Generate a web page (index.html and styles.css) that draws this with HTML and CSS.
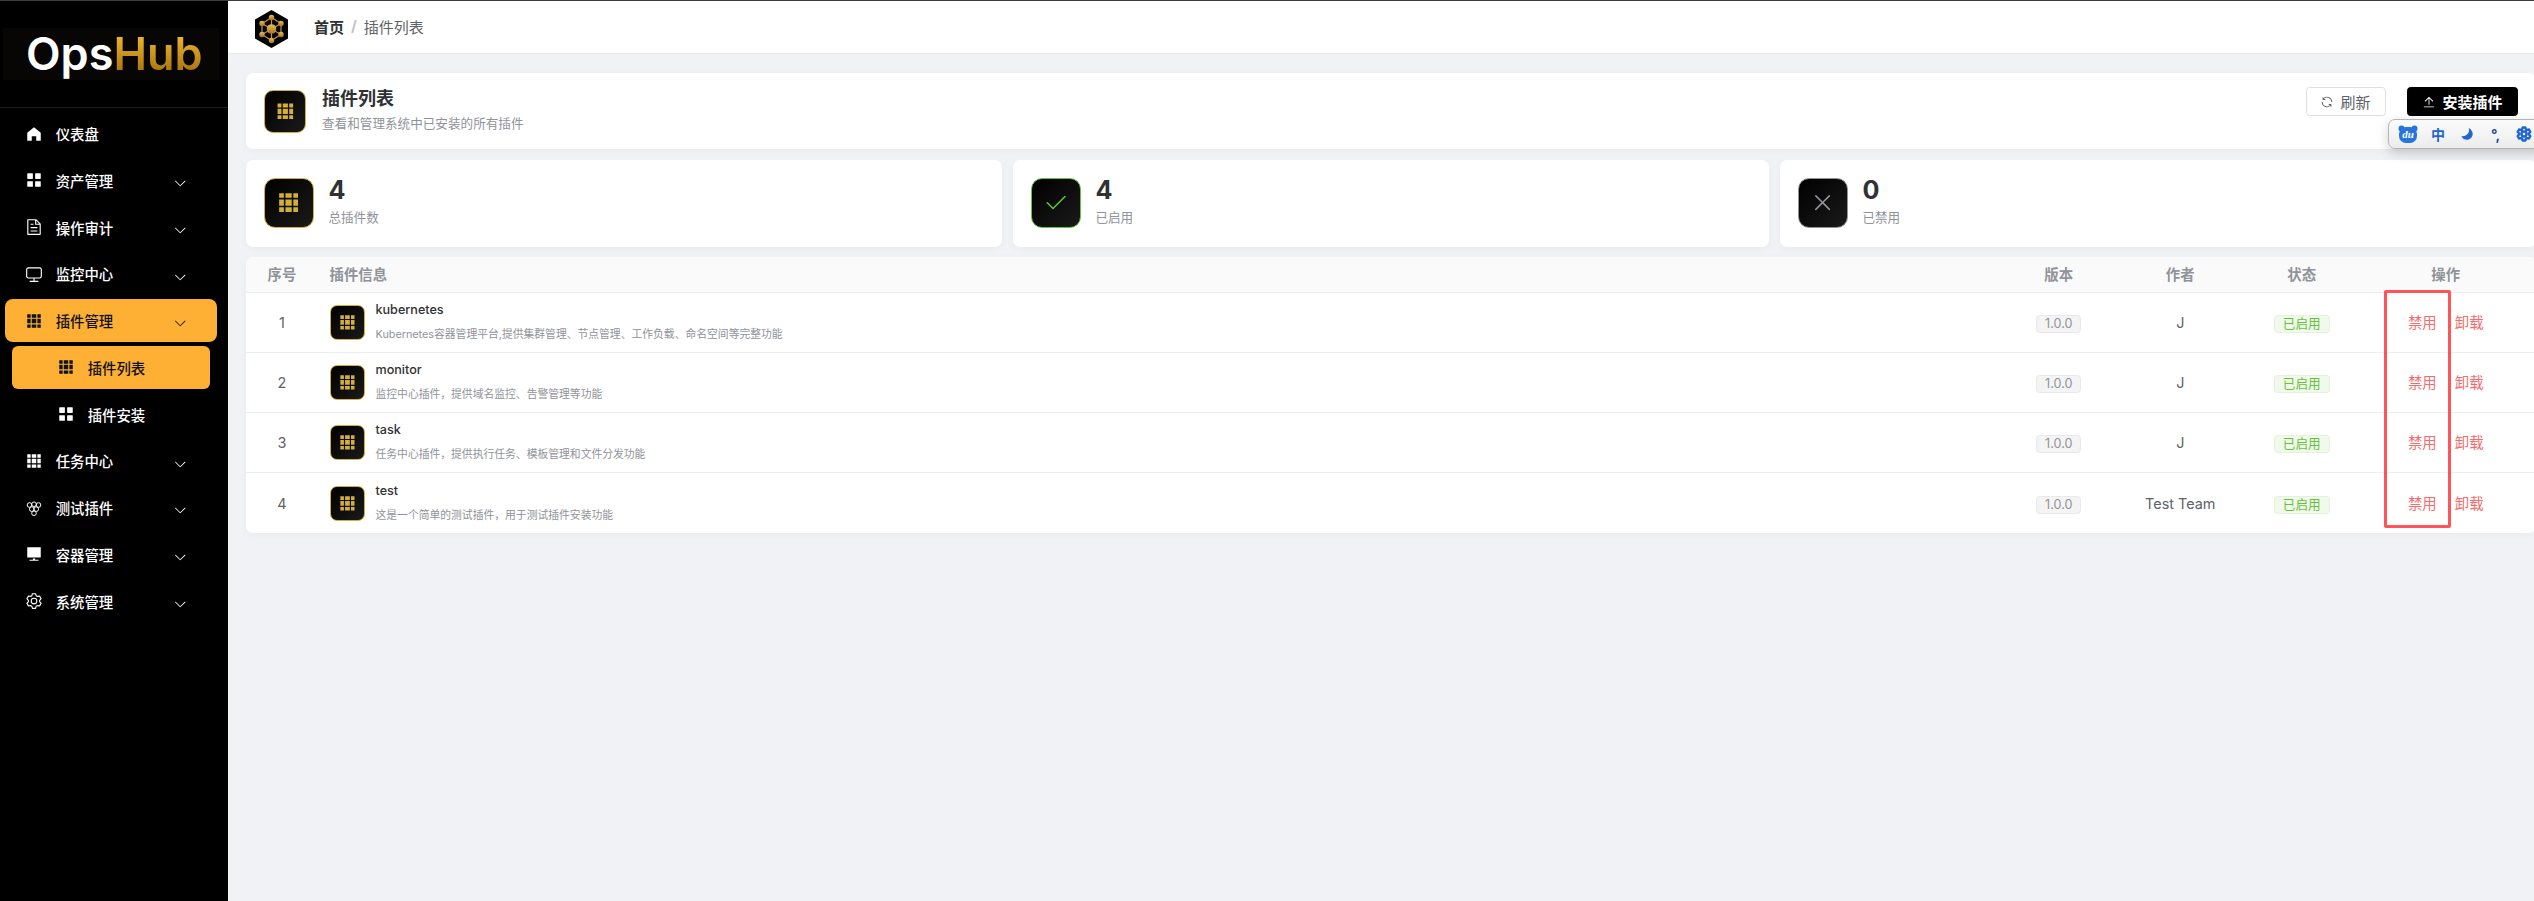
FILE: index.html
```html
<!DOCTYPE html>
<html lang="zh-CN">
<head>
    <meta charset="UTF-8">
    <title>OpsHub - 插件列表</title>
    <link rel="stylesheet" href="styles.css">
</head>
<body>
    <svg class="sprite" xmlns="http://www.w3.org/2000/svg">
        <symbol id="i-home" viewBox="0 0 1024 1024"><path d="M512 128 128 447.936V896h255.936V640H640v256h255.936V447.936z"/></symbol>
        <symbol id="i-menu" viewBox="0 0 1024 1024"><path d="M160 448a32 32 0 0 1-32-32V160.064a32 32 0 0 1 32-32h256a32 32 0 0 1 32 32V416a32 32 0 0 1-32 32zm448 0a32 32 0 0 1-32-32V160.064a32 32 0 0 1 32-32h255.936a32 32 0 0 1 32 32V416a32 32 0 0 1-32 32zM160 896a32 32 0 0 1-32-32V608a32 32 0 0 1 32-32h256a32 32 0 0 1 32 32v256a32 32 0 0 1-32 32zm448 0a32 32 0 0 1-32-32V608a32 32 0 0 1 32-32h255.936a32 32 0 0 1 32 32v256a32 32 0 0 1-32 32z"/></symbol>
        <symbol id="i-doc" viewBox="0 0 1024 1024"><path d="M832 384H576V128H192v768h640zm-26.496-64L640 154.496V320zM160 64h480l256 256v608a32 32 0 0 1-32 32H160a32 32 0 0 1-32-32V96a32 32 0 0 1 32-32m160 448h384v64H320zm0-192h160v64H320zm0 384h384v64H320z"/></symbol>
        <symbol id="i-monitor" viewBox="0 0 1024 1024"><path d="M544 768v128h192a32 32 0 1 1 0 64H288a32 32 0 1 1 0-64h192V768H192A128 128 0 0 1 64 640V256a128 128 0 0 1 128-128h640a128 128 0 0 1 128 128v384a128 128 0 0 1-128 128zM192 192a64 64 0 0 0-64 64v384a64 64 0 0 0 64 64h640a64 64 0 0 0 64-64V256a64 64 0 0 0-64-64z"/></symbol>
        <symbol id="i-grid" viewBox="0 0 1024 1024"><path d="M640 384v256H384V384zm64 0h192v256H704zm-64 512H384V704h256zm64 0V704h192v192zm-64-768v192H384V128zm64 0h192v192H704zM320 384v256H128V384zm0 512H128V704h192zm0-768v192H128V128z"/></symbol>
        <symbol id="i-grape" viewBox="0 0 24 24"><g fill="none" stroke="currentColor" stroke-width="1.300"><circle cx="6" cy="8" r="3.100"/><circle cx="12" cy="7" r="3.100"/><circle cx="18" cy="8" r="3.100"/><circle cx="9" cy="13.500" r="3.100"/><circle cx="15" cy="13.500" r="3.100"/><circle cx="12" cy="19" r="3.100"/></g></symbol>
        <symbol id="i-platform" viewBox="0 0 1024 1024"><path d="M448 832v-64h128v64h192v64H256v-64zM128 704V128h768v576z"/></symbol>
        <symbol id="i-setting" viewBox="0 0 1024 1024"><path d="M600.704 64a32 32 0 0 1 30.464 22.208l35.2 109.376c14.784 7.232 28.928 15.36 42.432 24.512l112.384-24.192a32 32 0 0 1 34.432 15.36L944.32 364.8a32 32 0 0 1-4.032 37.504l-77.12 85.12a357.12 357.12 0 0 1 0 49.024l77.12 85.248a32 32 0 0 1 4.032 37.504l-88.704 153.6a32 32 0 0 1-34.432 15.296L708.8 803.904c-13.44 9.088-27.648 17.28-42.368 24.512l-35.264 109.376A32 32 0 0 1 600.704 960H423.296a32 32 0 0 1-30.464-22.208L357.696 828.48a351.616 351.616 0 0 1-42.56-24.64l-112.32 24.256a32 32 0 0 1-34.432-15.36L79.68 659.2a32 32 0 0 1 4.032-37.504l77.12-85.248a357.12 357.12 0 0 1 0-48.896l-77.12-85.248A32 32 0 0 1 79.68 364.8l88.704-153.6a32 32 0 0 1 34.432-15.296l112.32 24.256c13.568-9.152 27.776-17.408 42.56-24.64l35.2-109.312A32 32 0 0 1 423.232 64H600.64zm-23.424 64H446.72l-36.352 113.088-24.512 11.968a294.113 294.113 0 0 0-34.816 20.096l-22.656 15.36-116.224-25.088-65.28 113.152 79.68 88.192-1.92 27.136a293.12 293.12 0 0 0 0 40.192l1.92 27.136-79.808 88.192 65.344 113.152 116.224-25.024 22.656 15.296a294.113 294.113 0 0 0 34.816 20.096l24.512 11.968L446.72 896h130.688l36.48-113.152 24.448-11.904a288.282 288.282 0 0 0 34.752-20.096l22.592-15.296 116.288 25.024 65.28-113.152-79.744-88.192 1.92-27.136a293.12 293.12 0 0 0 0-40.256l-1.92-27.136 79.808-88.128-65.344-113.152-116.288 24.96-22.592-15.232a287.616 287.616 0 0 0-34.752-20.096l-24.448-11.904L577.344 128zM512 320a192 192 0 1 1 0 384 192 192 0 0 1 0-384m0 64a128 128 0 1 0 0 256 128 128 0 0 0 0-256"/></symbol>
        <symbol id="i-arrow" viewBox="0 0 1024 1024"><path d="M831.872 340.864 512 652.672 192.128 340.864a30.592 30.592 0 0 0-42.752 0 29.12 29.12 0 0 0 0 41.6L489.664 714.24a32 32 0 0 0 44.672 0l340.288-331.712a29.12 29.12 0 0 0 0-41.728 30.592 30.592 0 0 0-42.752 0z"/></symbol>
        <symbol id="i-refresh" viewBox="0 0 1024 1024"><path d="M771.776 794.88A384 384 0 0 1 128 512h64a320 320 0 0 0 555.712 216.448H654.72a32 32 0 1 1 0-64h149.056a32 32 0 0 1 32 32v148.928a32 32 0 1 1-64 0v-50.56zM276.288 295.616h92.992a32 32 0 0 1 0 64H220.16a32 32 0 0 1-32-32V178.56a32 32 0 0 1 64 0v50.56A384 384 0 0 1 896.128 512h-64a320 320 0 0 0-555.776-216.384z"/></symbol>
        <symbol id="i-upload" viewBox="0 0 1024 1024"><path d="M160 832h704a32 32 0 1 1 0 64H160a32 32 0 1 1 0-64m384-578.304V704h-64V247.296L237.248 490.048 192 444.8 508.8 128l316.8 316.8-45.312 45.248z"/></symbol>
        <symbol id="i-check" viewBox="0 0 1024 1024"><path d="M406.656 706.944 195.84 496.256a32 32 0 1 0-45.248 45.248l256 256 512-512a32 32 0 0 0-45.248-45.248L406.592 706.944z"/></symbol>
        <symbol id="i-close" viewBox="0 0 1024 1024"><path d="M764.288 214.592 512 466.88 259.712 214.592a31.936 31.936 0 0 0-45.12 45.12L466.752 512 214.528 764.224a31.936 31.936 0 1 0 45.12 45.184L512 557.184l252.288 252.288a31.936 31.936 0 0 0 45.12-45.12L557.12 512.064l252.288-252.288a31.936 31.936 0 1 0-45.12-45.184z"/></symbol>
    </svg>

    <aside class="sidebar">
        <div class="logo-area">
            <div class="logo-panel"><span class="logo-ops">Ops</span><span class="logo-hub">Hub</span></div>
        </div>
        <nav class="menu">
            <a class="menu-item"><svg class="icon"><use href="#i-home"/></svg><span>仪表盘</span></a>
            <a class="menu-item"><svg class="icon"><use href="#i-menu"/></svg><span>资产管理</span><svg class="arrow"><use href="#i-arrow"/></svg></a>
            <a class="menu-item"><svg class="icon"><use href="#i-doc"/></svg><span>操作审计</span><svg class="arrow"><use href="#i-arrow"/></svg></a>
            <a class="menu-item"><svg class="icon"><use href="#i-monitor"/></svg><span>监控中心</span><svg class="arrow"><use href="#i-arrow"/></svg></a>
            <a class="menu-item active"><svg class="icon"><use href="#i-grid"/></svg><span>插件管理</span><svg class="arrow"><use href="#i-arrow"/></svg></a>
            <a class="menu-item sub active"><svg class="icon"><use href="#i-grid"/></svg><span>插件列表</span></a>
            <a class="menu-item sub"><svg class="icon"><use href="#i-menu"/></svg><span>插件安装</span></a>
            <a class="menu-item"><svg class="icon"><use href="#i-grid"/></svg><span>任务中心</span><svg class="arrow"><use href="#i-arrow"/></svg></a>
            <a class="menu-item"><svg class="icon"><use href="#i-grape"/></svg><span>测试插件</span><svg class="arrow"><use href="#i-arrow"/></svg></a>
            <a class="menu-item"><svg class="icon"><use href="#i-platform"/></svg><span>容器管理</span><svg class="arrow"><use href="#i-arrow"/></svg></a>
            <a class="menu-item"><svg class="icon"><use href="#i-setting"/></svg><span>系统管理</span><svg class="arrow"><use href="#i-arrow"/></svg></a>
        </nav>
    </aside>

    <main class="main">
        <header class="topbar">
            <svg class="hex-logo" viewBox="0 0 33 38" xmlns="http://www.w3.org/2000/svg">
                <defs>
                    <linearGradient id="gold" x1="0" y1="0" x2="0" y2="1">
                        <stop offset="0" stop-color="#e6bd5c"/>
                        <stop offset="1" stop-color="#a8741c"/>
                    </linearGradient>
                </defs>
                <path d="M16.5 0 33 9.5v19L16.5 38 0 28.500V9.500z" fill="#000"/>
                <g stroke="#c8953a" stroke-width="1.2" fill="none">
                    <path d="M16.500 7.500 26 13.500v11L16.500 30.500 7 24.500v-11z"/>
                    <path d="M16.500 7.500v23M7 13.500l19 11M26 13.500l-19 11"/>
                </g>
                <g fill="url(#gold)">
                    <circle cx="16.500" cy="7.500" r="2.700"/>
                    <circle cx="26" cy="13.500" r="2.700"/>
                    <circle cx="26" cy="24.500" r="2.700"/>
                    <circle cx="16.500" cy="30.500" r="2.700"/>
                    <circle cx="7" cy="24.500" r="2.700"/>
                    <circle cx="7" cy="13.500" r="2.700"/>
                    <circle cx="16.500" cy="19" r="4.800"/>
                </g>
            </svg>
            <div class="breadcrumb">
                <span class="crumb-home">首页</span>
                <span class="crumb-sep">/</span>
                <span class="crumb-current">插件列表</span>
            </div>
        </header>

        <div class="content">
            <section class="card page-head">
                <div class="gold-box head-box"><svg><use href="#i-grid"/></svg></div>
                <div class="page-text">
                    <div class="page-title">插件列表</div>
                    <div class="page-sub">查看和管理系统中已安装的所有插件</div>
                </div>
                <div class="page-actions">
                    <button class="btn btn-plain"><svg><use href="#i-refresh"/></svg>刷新</button>
                    <button class="btn btn-dark"><svg><use href="#i-upload"/></svg>安装插件</button>
                </div>
            </section>

            <section class="stats">
                <div class="card stat">
                    <div class="gold-box stat-box"><svg><use href="#i-grid"/></svg></div>
                    <div class="stat-text">
                        <div class="stat-num">4</div>
                        <div class="stat-label">总插件数</div>
                    </div>
                </div>
                <div class="card stat">
                    <div class="gold-box stat-box green"><svg><use href="#i-check"/></svg></div>
                    <div class="stat-text">
                        <div class="stat-num">4</div>
                        <div class="stat-label">已启用</div>
                    </div>
                </div>
                <div class="card stat">
                    <div class="gold-box stat-box gray"><svg><use href="#i-close"/></svg></div>
                    <div class="stat-text">
                        <div class="stat-num">0</div>
                        <div class="stat-label">已禁用</div>
                    </div>
                </div>
            </section>

            <section class="card plugin-table">
                <div class="row head-row">
                    <div class="cell-c">序号</div>
                    <div class="cell-info">插件信息</div>
                    <div class="cell-c">版本</div>
                    <div class="cell-c">作者</div>
                    <div class="cell-c">状态</div>
                    <div class="cell-c">操作</div>
                </div>
                <div class="row">
                    <div class="cell-c">1</div>
                    <div class="cell-info">
                        <div class="gold-box row-box"><svg><use href="#i-grid"/></svg></div>
                        <div class="plugin-text">
                            <div class="plugin-name">kubernetes</div>
                            <div class="plugin-desc">Kubernetes容器管理平台,提供集群管理、节点管理、工作负载、命名空间等完整功能</div>
                        </div>
                    </div>
                    <div class="cell-c"><span class="tag tag-gray">1.0.0</span></div>
                    <div class="cell-c">J</div>
                    <div class="cell-c"><span class="tag tag-green">已启用</span></div>
                    <div class="cell-c ops"><a>禁用</a><a>卸载</a></div>
                </div>
                <div class="row">
                    <div class="cell-c">2</div>
                    <div class="cell-info">
                        <div class="gold-box row-box"><svg><use href="#i-grid"/></svg></div>
                        <div class="plugin-text">
                            <div class="plugin-name">monitor</div>
                            <div class="plugin-desc">监控中心插件，提供域名监控、告警管理等功能</div>
                        </div>
                    </div>
                    <div class="cell-c"><span class="tag tag-gray">1.0.0</span></div>
                    <div class="cell-c">J</div>
                    <div class="cell-c"><span class="tag tag-green">已启用</span></div>
                    <div class="cell-c ops"><a>禁用</a><a>卸载</a></div>
                </div>
                <div class="row">
                    <div class="cell-c">3</div>
                    <div class="cell-info">
                        <div class="gold-box row-box"><svg><use href="#i-grid"/></svg></div>
                        <div class="plugin-text">
                            <div class="plugin-name">task</div>
                            <div class="plugin-desc">任务中心插件，提供执行任务、模板管理和文件分发功能</div>
                        </div>
                    </div>
                    <div class="cell-c"><span class="tag tag-gray">1.0.0</span></div>
                    <div class="cell-c">J</div>
                    <div class="cell-c"><span class="tag tag-green">已启用</span></div>
                    <div class="cell-c ops"><a>禁用</a><a>卸载</a></div>
                </div>
                <div class="row">
                    <div class="cell-c">4</div>
                    <div class="cell-info">
                        <div class="gold-box row-box"><svg><use href="#i-grid"/></svg></div>
                        <div class="plugin-text">
                            <div class="plugin-name">test</div>
                            <div class="plugin-desc">这是一个简单的测试插件，用于测试插件安装功能</div>
                        </div>
                    </div>
                    <div class="cell-c"><span class="tag tag-gray">1.0.0</span></div>
                    <div class="cell-c">Test Team</div>
                    <div class="cell-c"><span class="tag tag-green">已启用</span></div>
                    <div class="cell-c ops"><a>禁用</a><a>卸载</a></div>
                </div>
            </section>
        </div>
    </main>

    <!-- input method toolbar sitting over the page -->
    <div class="ime-bar">
        <svg class="ime-bear" viewBox="0 0 20 18">
            <circle cx="3.500" cy="3.500" r="3"/>
            <circle cx="16.500" cy="3.500" r="3"/>
            <rect x="1" y="2" width="18" height="16" rx="7"/>
            <text x="10" y="13" text-anchor="middle">du</text>
        </svg>
        <span class="ime-zh">中</span>
        <svg class="ime-moon" viewBox="0 0 16 16"><path d="M10 1c1.500 5-1.500 9.500-8.500 9.500C3 13.500 6 15 9 14.500c4.500-.8 6.500-5.500 5-9C13.300 3.500 12 2 10 1z"/></svg>
        <span class="ime-punct">°,</span>
        <svg class="ime-gear"><use href="#i-setting"/></svg>
    </div>

    <!-- red annotation drawn on the screenshot -->
    <div class="red-box"></div>
</body>
</html>
```

FILE: styles.css
```css
* {
    margin: 0;
    padding: 0;
    box-sizing: border-box;
}

html, body {
    height: 100%;
}

body {
    display: flex;
    overflow: hidden;
    font-family: Inter, "Noto Sans CJK SC", sans-serif;
    font-size: 14.4px;
    color: #606266;
    background-color: #f0f2f5;
    border-top: 1px solid #3d3a40;
}

.sprite {
    display: none;
}

svg {
    fill: currentColor;
    flex-shrink: 0;
}

/* sidebar */
.sidebar {
    width: 228px;
    flex-shrink: 0;
    background-color: #000;
    color: #fff;
}

.logo-area {
    height: 107px;
    padding: 27px 9px 0 3px;
    border-bottom: 1px solid #1c1c1c;
}

.logo-panel {
    height: 52px;
    padding-left: 23px;
    background-color: #070605;
    font-size: 45px;
    font-weight: 600;
    line-height: 52px;
}

.logo-ops {
    color: #fff;
}

.logo-hub {
    background: linear-gradient(180deg, #eeb92e 15%, #a9720f 85%);
    -webkit-background-clip: text;
    background-clip: text;
    color: transparent;
}

.menu {
    padding-top: 4px;
    display: flex;
    flex-direction: column;
    gap: 3.750px;
}

.menu-item {
    display: flex;
    align-items: center;
    height: 43px;
    margin: 0 11px 0 5px;
    padding: 0 30px 0 20px;
    border-radius: 8px;
    font-weight: 500;
    color: #fff;
}

.menu-item .icon {
    width: 18px;
    height: 18px;
    margin-right: 12.700px;
}

.menu-item .arrow {
    width: 14.400px;
    height: 14.400px;
    margin-left: auto;
    margin-top: 6px;
}

.menu-item.sub {
    margin: 0 18px 0 12px;
    padding-left: 45px;
    border-radius: 6px;
}

.menu-item.active {
    background-color: #fdb034;
    color: #111;
}

/* top bar */
.main {
    flex: 1;
    min-width: 0;
    overflow: hidden;
}

.topbar {
    display: flex;
    align-items: center;
    gap: 26px;
    height: 53px;
    padding-left: 27px;
    background-color: #fff;
    border-bottom: 1px solid #e6e8eb;
}

.hex-logo {
    width: 33px;
    height: 38px;
    margin-top: 4px;
}

.breadcrumb {
    display: flex;
    gap: 7px;
    padding-bottom: 2px;
    font-size: 15px;
}

.crumb-home {
    font-weight: 600;
    color: #303133;
}

.crumb-sep {
    color: #c0c4cc;
    font-weight: 700;
}

.crumb-current {
    color: #606266;
}

/* content */
.content {
    display: flex;
    flex-direction: column;
    gap: 10.500px;
    width: 2308px;
    padding: 19px 0 0 18px;
}

.card {
    background-color: #fff;
    border-radius: 7px;
    box-shadow: 0 2px 10px rgba(0, 0, 0, 0.03);
}

.gold-box {
    display: flex;
    align-items: center;
    justify-content: center;
    flex-shrink: 0;
    background: linear-gradient(135deg, #000, #1a1a1a);
    border: 1px solid #d4af37;
    color: #d4af37;
}

.page-head {
    display: flex;
    align-items: center;
    height: 76px;
    padding: 0 18px;
}

.head-box {
    width: 42px;
    height: 43px;
    border-radius: 9px;
}

.head-box svg {
    width: 20.700px;
    height: 20.700px;
}

.page-text {
    margin-left: 16px;
    padding-bottom: 2px;
}

.page-title {
    font-size: 18px;
    font-weight: 600;
    line-height: 25px;
    color: #303133;
}

.page-sub {
    margin-top: 3px;
    font-size: 12.600px;
    line-height: 20px;
    color: #909399;
}

.page-actions {
    display: flex;
    align-self: flex-start;
    gap: 21.500px;
    margin: 14px 0 0 auto;
}

.btn {
    display: flex;
    align-items: center;
    justify-content: center;
    gap: 6px;
    height: 29px;
    border-radius: 3.600px;
    font-family: inherit;
    font-size: 15px;
}

.btn svg {
    width: 14px;
    height: 14px;
}

.btn-plain {
    width: 80px;
    background-color: #fff;
    border: 1px solid #dcdfe6;
    color: #606266;
}

.btn-dark {
    width: 111px;
    background-color: #000;
    border: 1px solid #000;
    color: #fff;
    font-weight: 600;
}

.stats {
    display: grid;
    grid-template-columns: repeat(3, 756px);
    gap: 11px;
}

.stat {
    display: flex;
    align-items: center;
    gap: 14.400px;
    height: 87px;
    padding: 0 18px;
}

.stat-box {
    width: 50px;
    height: 50px;
    border-radius: 11px;
}

.stat-box svg {
    width: 25.200px;
    height: 25.200px;
}

.stat-box.green {
    border-color: #67c23a;
    color: #67c23a;
}

.stat-box.gray {
    border-color: #909399;
    color: #909399;
}

.stat-text {
    padding-bottom: 3px;
}

.stat-num {
    font-size: 25.200px;
    font-weight: 700;
    line-height: 30px;
    color: #303133;
}

.stat-label {
    margin-top: 3px;
    font-size: 12.600px;
    line-height: 20px;
    color: #909399;
}

/* table */
.plugin-table {
    overflow: hidden;
}

.row {
    display: grid;
    grid-template-columns: 72px 1fr 121.500px 121.500px 121.500px 166.500px;
    align-items: center;
    height: 60px;
    padding-right: 7px;
    border-bottom: 1px solid #ebeef5;
}

.row:last-child {
    border-bottom: none;
}

.head-row {
    height: 36px;
    padding-bottom: 2px;
    background-color: #fafafa;
    font-weight: 600;
    color: #909399;
}

.cell-c {
    display: flex;
    align-items: center;
    justify-content: center;
}

.cell-info {
    display: flex;
    align-items: center;
    gap: 11px;
    padding-left: 11.500px;
}

.row-box {
    width: 35px;
    height: 35px;
    border-radius: 7px;
}

.row-box svg {
    width: 18.900px;
    height: 18.900px;
}

.plugin-name {
    font-size: 12.600px;
    font-weight: 500;
    line-height: 18px;
    color: #303133;
}

.plugin-desc {
    margin-top: 7px;
    font-size: 10.800px;
    line-height: 18px;
    color: #909399;
}

.tag {
    display: inline-block;
    height: 18px;
    margin-top: 3px;
    padding: 0 8px;
    border: 1px solid;
    border-radius: 3.600px;
    font-size: 12.600px;
    line-height: 16px;
}

.tag-gray {
    background-color: #f4f4f5;
    border-color: #e9e9eb;
    color: #909399;
}

.tag-green {
    background-color: #f0f9eb;
    border-color: #e1f3d8;
    color: #67c23a;
}

.ops {
    gap: 18px;
    padding-bottom: 2px;
    color: #f56c6c;
}

/* overlays */
.ime-bar {
    position: absolute;
    left: 2388px;
    top: 119px;
    width: 160px;
    height: 30px;
    display: flex;
    align-items: center;
    padding-left: 9px;
    background: linear-gradient(180deg, #fbfbfb, #ececec);
    border: 1px solid #b5b5b5;
    border-radius: 7px;
    box-shadow: 0 4px 12px rgba(0, 0, 0, 0.18);
    color: #1e66d0;
}

.ime-bear {
    width: 20px;
    height: 18px;
    fill: #2674de;
}

.ime-bear text {
    fill: #fff;
    font-family: "Liberation Serif", serif;
    font-size: 11px;
    font-style: italic;
    font-weight: 700;
}

.ime-zh {
    margin-left: 13px;
    font-size: 14px;
    font-weight: 700;
}

.ime-moon {
    width: 14px;
    height: 14px;
    margin-left: 15px;
}

.ime-punct {
    margin-left: 17px;
    font-size: 14px;
    font-weight: 700;
    color: #1e4f9a;
}

.ime-gear {
    width: 16px;
    height: 16px;
    margin-left: 16px;
    stroke: currentColor;
    stroke-width: 90;
}

.red-box {
    position: absolute;
    left: 2384px;
    top: 290px;
    width: 67px;
    height: 238px;
    border: 3px solid #ff5558;
    border-radius: 2px;
}
```
